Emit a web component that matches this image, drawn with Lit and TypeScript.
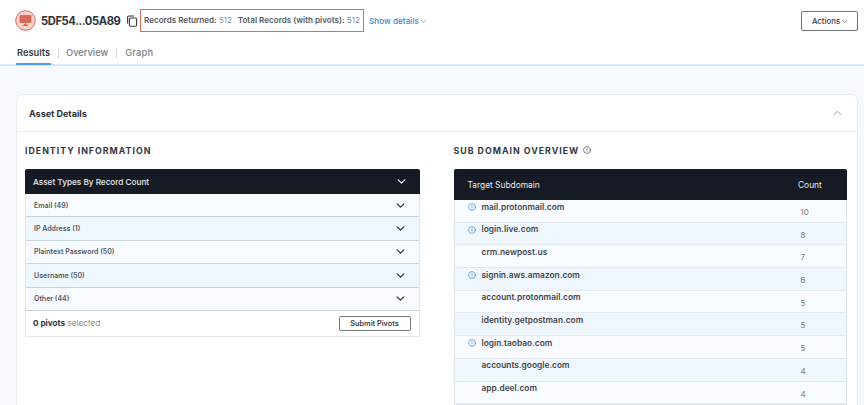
import { LitElement, html, css } from "lit";
import { customElement } from "lit/decorators.js";

const chevron = (w = 10, sw = 1.3) => html`<svg width=${w} height=${Math.round(w * 0.6)} viewBox="0 0 10 6" fill="none" stroke="currentColor" stroke-width=${sw} stroke-linecap="round" stroke-linejoin="round"><path d="M1 1l4 4 4-4"/></svg>`;
const info = (c: string, s = 9) => html`<svg width=${s} height=${s} viewBox="0 0 10 10" fill="none" stroke=${c} stroke-width="0.9" stroke-linecap="round"><circle cx="5" cy="5" r="4.3"/><path d="M5 2.8v2.6M5 7v.2"/></svg>`;

const assets = ["Email (49)", "IP Address (1)", "Plaintext Password (50)", "Username (50)", "Other (44)"];
const rows: [string, number, boolean][] = [
  ["mail.protonmail.com", 10, true],
  ["login.live.com", 8, true],
  ["crm.newpost.us", 7, false],
  ["signin.aws.amazon.com", 6, true],
  ["account.protonmail.com", 5, false],
  ["identity.getpostman.com", 5, false],
  ["login.taobao.com", 5, true],
  ["accounts.google.com", 4, false],
  ["app.deel.com", 4, false],
];

@customElement("app-root")
export class AppRoot extends LitElement {
  static styles = css`
    :host { display: block; width: 864px; height: 405px; overflow: hidden; background: #f6fafe; font-family: Inter, "Noto Sans", sans-serif; color: #2b2f38; }
    * { box-sizing: border-box; }
    .top { background: #fff; height: 66px; border-bottom: 2px solid #d6e8f7; padding: 0 6px 0 15px; display: flex; flex-direction: column; }
    .bar { display: flex; align-items: center; height: 40px; padding-top: 1px; }
    .logo { width: 21px; height: 21px; margin-right: 5px; flex: none; }
    .id { font-size: 11.2px; font-weight: 700; color: #2e323a; width: 85px; white-space: nowrap; letter-spacing: -0.4px; }
    .copy { width: 12px; height: 12px; flex: none; }
    .records { margin-left: 2px; margin-top: -1px; height: 23px; border: 1.5px solid #e06a5a; display: flex; align-items: center; padding: 0 3px; font-size: 8.1px; width: 224px; white-space: nowrap; color: #8a8e96; }
    .records b { font-weight: 600; color: #555962; }
    .records .r1 { width: 95px; }
    .show { margin-left: 5px; font-size: 8.2px; font-weight: 500; color: #3d88d1; display: flex; align-items: center; gap: 2px; white-space: nowrap; }
    .show svg, .act svg { margin-top: 1px; }
    .act { margin-left: auto; width: 57px; height: 20px; border: 1px solid #6f7378; border-radius: 2px; display: flex; align-items: center; justify-content: center; gap: 2px; font-size: 7.8px; font-weight: 500; color: #3a3e46; background: #fff; }
    .tabs { display: flex; align-items: flex-start; height: 24px; font-size: 9.3px; font-weight: 500; color: #7a7e86; padding-left: 1px; }
    .tab { position: relative; height: 24px; padding-top: 7px; }
    .tab.on { color: #3a3e46; font-weight: 600; width: 35px; padding-left: 1px; }
    .tab.on::after { content: ""; position: absolute; left: 0; right: 0; bottom: -1px; height: 2px; background: #4f9ee0; }
    .tab.g { letter-spacing: 0.2px; }
    .sep { width: 1px; height: 11px; background: #d8dade; margin: 8px 7px 0; }
    .sep.b { margin: 8px 8px 0; }
    .page { padding: 28px 6px 0 16px; }
    .card { background: #fff; border: 1px solid #e8edf2; border-radius: 7px 7px 0 0; height: 320px; }
    .cardhead { height: 37px; border-bottom: 1px solid #e9edf1; display: flex; align-items: center; justify-content: space-between; padding: 0 15px 0 12px; font-size: 9px; font-weight: 700; color: #2c3038; }
    .cardhead svg { color: #8c9096; }
    .cols { display: flex; padding: 0 10px 0 8px; }
    .left { width: 395px; margin-right: 33px; }
    .right { width: 394px; margin-left: 1px; }
    h3 { margin: 0; height: 37px; display: flex; align-items: center; gap: 4px; padding-bottom: 1px; font-size: 8.8px; font-weight: 700; letter-spacing: 1px; color: #33373f; white-space: nowrap; }
    .panel { border: 1px solid #e3e6ea; border-top: 0; border-radius: 3px 3px 0 0; }
    .dark { background: #151a24; color: #e8eaee; margin: 0 -1px; border-radius: 2px 2px 0 0; display: flex; align-items: center; justify-content: space-between; }
    .phead { height: 25px; padding: 0 14px 0 8px; font-size: 8.2px; font-weight: 500; }
    .acc { height: 23.4px; display: flex; align-items: center; justify-content: space-between; padding: 0 14px 0 8px; font-size: 7px; font-weight: 600; color: #555962; background: #f7fbff; border-bottom: 1.5px solid #c9d3de; }
    .acc:nth-of-type(odd) { background: #eef6fe; }
    .acc svg { color: #2d3139; }
    .foot { height: 25px; display: flex; align-items: center; justify-content: space-between; padding: 0 8px 0 7px; font-size: 8.2px; color: #8a8e96; }
    .foot b { color: #33373f; font-weight: 700; }
    .submit { width: 72px; height: 15px; border: 1px solid #777b80; border-radius: 2px; display: flex; align-items: center; justify-content: center; font-size: 7.3px; font-weight: 600; color: #3b3f47; }
    .thead { height: 31px; font-size: 8.4px; font-weight: 400; padding: 0 25px 0 14px; margin: 0; }
    .thead .c { width: 24px; }
    .tbl { border: 1px solid #dfe4ea; border-top: 0; }
    .row { height: 22.7px; display: grid; grid-template-columns: 346px 1fr; background: #f8fbff; border-bottom: 1px solid #e4e9ef; font-size: 8.4px; }
    .row:nth-child(even) { background: #f0f6fd; }
    .name { display: flex; align-items: flex-start; padding: 1.5px 0 0 13px; font-weight: 600; color: #42464e; white-space: nowrap; }
    .ic { width: 14px; flex: none; padding-top: 1.5px; display: flex; }
    .num { padding-top: 7px; font-size: 8px; color: #777b82; }
  `;

  render() {
    return html`
      <div class="top">
        <div class="bar">
          <svg class="logo" viewBox="0 0 21 21">
            <circle cx="10.5" cy="10.5" r="9.8" fill="#f8d3cd" stroke="#dc6454" stroke-width="1"/>
            <rect x="4.6" y="5" width="11.8" height="8" rx="1" fill="#d4695c"/>
            <path d="M10.5 13l3.2 3H7.3z" fill="#d4695c"/>
          </svg>
          <span class="id">5DF54...05A89</span>
          <svg class="copy" viewBox="0 0 12 12" fill="none" stroke="#33373f" stroke-width="1.1"><rect x="3.4" y="3" width="7.2" height="8.2" rx="1.2"/><path d="M1.6 8.6V2.2A1.2 1.2 0 0 1 2.8 1h5.4"/></svg>
          <div class="records"><span class="r1"><b>Records Returned:</b> 512</span><span><b>Total Records (with pivots):</b> 512</span></div>
          <span class="show">Show details ${chevron(5)}</span>
          <div class="act">Actions ${chevron(5)}</div>
        </div>
        <div class="tabs">
          <div class="tab on">Results</div><div class="sep"></div>
          <div class="tab">Overview</div><div class="sep b"></div>
          <div class="tab g">Graph</div>
        </div>
      </div>
      <div class="page">
        <div class="card">
          <div class="cardhead"><span>Asset Details</span><svg width="9" height="6" viewBox="0 0 10 6" fill="none" stroke="currentColor" stroke-width="1" stroke-linecap="round" stroke-linejoin="round"><path d="M1 5l4-4 4 4"/></svg></div>
          <div class="cols">
            <div class="left">
              <h3>IDENTITY INFORMATION</h3>
              <div class="panel">
                <div class="dark phead"><span>Asset Types By Record Count</span>${chevron(9, 1.5)}</div>
                ${assets.map((a) => html`<div class="acc"><span>${a}</span>${chevron(9, 1.5)}</div>`)}
                <div class="foot"><span><b>0 pivots</b> selected</span><div class="submit">Submit Pivots</div></div>
              </div>
            </div>
            <div class="right">
              <h3>SUB DOMAIN OVERVIEW ${info("#55595f", 8)}</h3>
              <div class="dark thead"><span>Target Subdomain</span><span class="c">Count</span></div>
              <div class="tbl">
                ${rows.map(([n, c, i]) => html`<div class="row"><div class="name"><span class="ic">${i ? info("#4f94d4", 8) : ""}</span>${n}</div><div class="num">${c}</div></div>`)}
              </div>
            </div>
          </div>
        </div>
      </div>
    `;
  }
}
